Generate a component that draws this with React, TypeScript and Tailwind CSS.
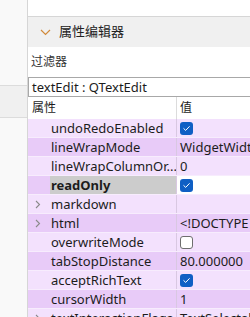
import React from "react";

type Row = {
  name: string;
  value?: string;
  check?: boolean;
  expand?: boolean;
  bold?: boolean;
};

const rows: Row[] = [
  { name: "undoRedoEnabled", check: true },
  { name: "lineWrapMode", value: "WidgetWidth" },
  { name: "lineWrapColumnOr...", value: "0" },
  { name: "readOnly", check: true, bold: true },
  { name: "markdown", expand: true, value: "" },
  { name: "html", expand: true, value: "<!DOCTYPE HTML PUBLIC" },
  { name: "overwriteMode", check: false },
  { name: "tabStopDistance", value: "80.000000" },
  { name: "acceptRichText", check: true },
  { name: "cursorWidth", value: "1" },
  { name: "textInteractionFlags", expand: true, value: "TextSelectableByMouse" },
];

const font = {
  fontFamily: '"Noto Sans", "Noto Sans CJK SC", sans-serif',
};

function Check({ on }: { on: boolean }) {
  if (!on)
    return (
      <span className="block w-[13px] h-[13px] rounded-[3px] border border-[#6e6e6e] bg-white" />
    );
  return (
    <span className="flex items-center justify-center w-[13px] h-[13px] rounded-[3px] bg-[#0f5fc4]">
      <svg width="9" height="9" viewBox="0 0 9 9" fill="none">
        <path d="M1.8 4.6 L3.7 6.4 L7.3 2.6" stroke="white" strokeWidth="1" strokeLinecap="round" strokeLinejoin="round" />
      </svg>
    </span>
  );
}

function Arrow() {
  return (
    <svg width="6" height="9" viewBox="0 0 6 9" fill="none" className="absolute left-[7px] top-[5px]">
      <path d="M1 1 L4.5 4.5 L1 8" stroke="#8a8a8a" strokeWidth="1.1" />
    </svg>
  );
}

export default function App() {
  return (
    <div
      className="flex w-[250px] h-[317px] overflow-hidden bg-white text-[#1c1c1c]"
      style={font}
    >
      {/* left dock strip */}
      <div className="flex flex-col w-[28px] shrink-0 border-r border-[#d6d6d6] bg-[#f9f9f9]">
        <div className="h-[86px] shrink-0 border-b border-[#dcdcdc]" />
        <div className="h-[32px] shrink-0 border-b border-[#dcdcdc] bg-[#f0f0f0]" />
        <div className="flex-1" />
      </div>

      <div className="flex flex-col flex-1 min-w-0">
        <div className="h-[17px] shrink-0 border-b border-[#d6d6d6] bg-white" />

        <div className="flex items-center h-[30px] shrink-0 bg-[#f0f0f0] pl-[12px] gap-[8px]">
          <svg width="11" height="7" viewBox="0 0 11 7" fill="none">
            <path d="M1 1 L5.5 5.5 L10 1" stroke="#d18a3a" strokeWidth="1.2" />
          </svg>
          <span className="text-[13px] text-[#222]">属性编辑器</span>
        </div>

        <div className="flex items-center h-[30px] shrink-0 bg-white pl-[3px] text-[12px] text-[#333]">
          过滤器
        </div>

        <div className="flex items-center h-[20px] shrink-0 border border-r-0 border-[#a8a8a8] pl-[3px] text-[13px] leading-none">
          textEdit : QTextEdit
        </div>

        <div className="flex h-[22px] shrink-0 bg-white text-[12px]">
          <div className="flex items-center w-[149px] shrink-0 border-r border-[#dcdcdc] pl-[4px]">
            属性
          </div>
          <div className="flex items-center pl-[3px]">值</div>
        </div>

        {rows.map((r, i) => {
          const dark = i % 2 === 1;
          const bg = dark ? "bg-[#e8cbf8]" : "bg-[#f3e1fd]";
          return (
            <div
              key={r.name}
              className={`flex h-[19px] shrink-0 border-b border-[#f7ecfd] text-[13px] leading-none ${bg}`}
            >
              <div className="relative flex w-[149px] shrink-0 border-r border-[#d9c8e2]">
                {r.expand && <Arrow />}
                <div
                  className={`flex items-center flex-1 ml-[22px] pl-[1px] whitespace-nowrap overflow-hidden ${
                    r.bold ? "bg-[#cccccc] font-bold" : ""
                  }`}
                >
                  {r.name}
                </div>
              </div>
              <div
                className={`flex items-center flex-1 min-w-0 pl-[3px] whitespace-nowrap overflow-hidden ${
                  r.bold ? "bg-white" : ""
                }`}
              >
                {r.check !== undefined ? <Check on={r.check} /> : r.value}
              </div>
            </div>
          );
        })}
      </div>
    </div>
  );
}
